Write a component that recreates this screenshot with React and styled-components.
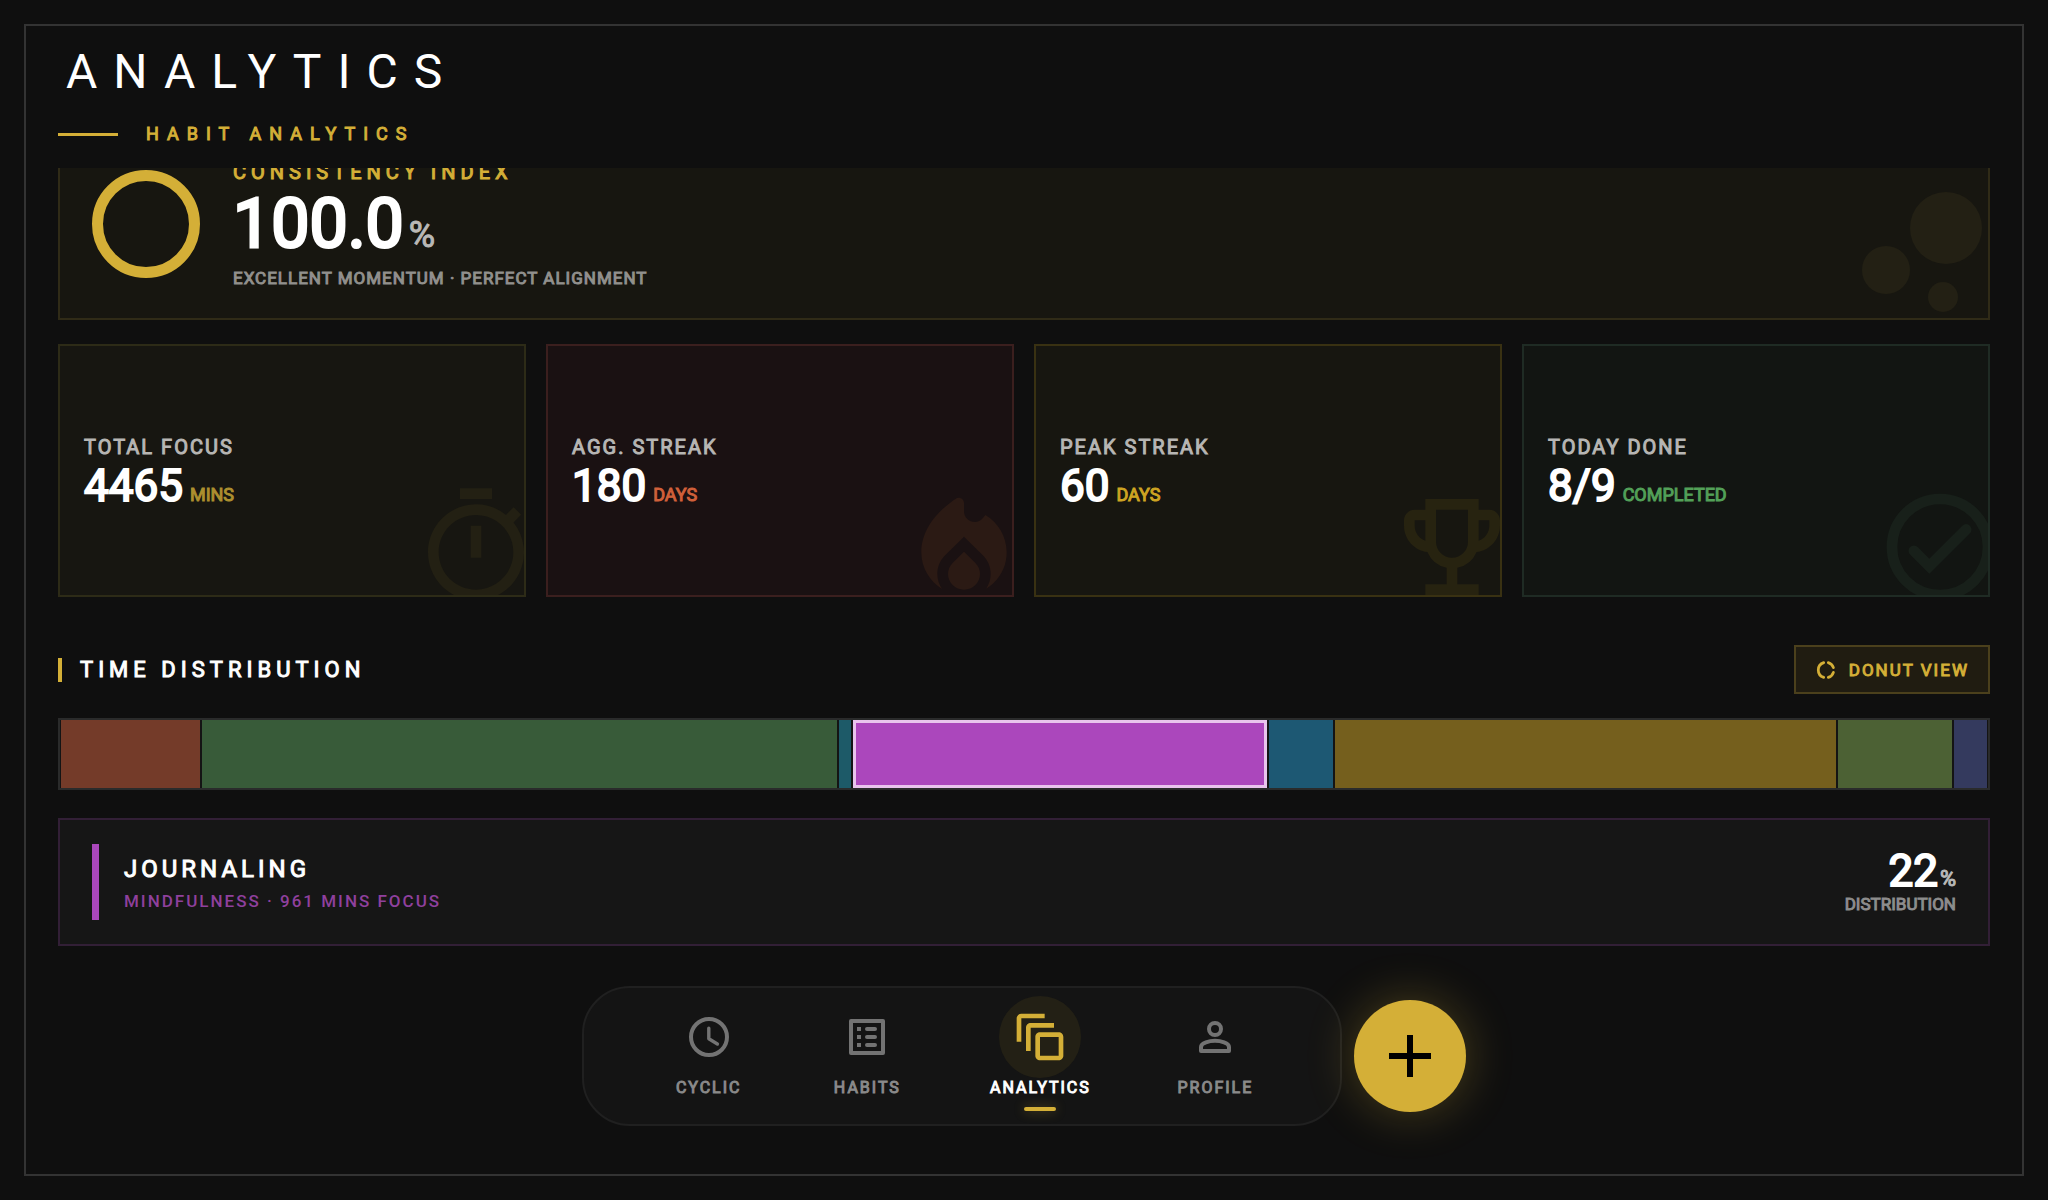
import React, { useLayoutEffect, useRef } from 'react';
import styled, { createGlobalStyle } from 'styled-components';
import {
  MdAdd,
  MdBubbleChart,
  MdOutlineAutoAwesomeMotion,
  MdOutlineEmojiEvents,
  MdOutlineTimer,
} from 'react-icons/md';

const GOLD = '#d4af37';

const GlobalStyle = createGlobalStyle`
  * {
    box-sizing: border-box;
  }

  body {
    margin: 0;
    background: #0f0f0f;
    color: #fff;
    font-family: Roboto, "Liberation Sans", sans-serif;
  }

  h1, h2, h3, p {
    margin: 0;
    font-weight: 400;
  }
`;

const Page = styled.div`
  height: 100vh;
  padding: 24px;
`;

const Frame = styled.div`
  position: relative;
  display: flex;
  flex-direction: column;
  height: 100%;
  border: 2px solid #333;
`;

const Header = styled.header`
  padding: 18px 32px 22px;
`;

const Title = styled.h1`
  padding-left: 8px;
  font-size: 48px;
  line-height: 56px;
  letter-spacing: 16px;
`;

const Subtitle = styled.div`
  display: flex;
  align-items: center;
  gap: 28px;
  margin-top: 22px;
  color: ${GOLD};
  font-size: 18px;
  line-height: 24px;
  letter-spacing: 8px;
  -webkit-text-stroke: 1px;
`;

const Dash = styled.span`
  width: 60px;
  height: 3px;
  background: ${GOLD};
`;

const Scroller = styled.main`
  flex: 1;
  min-height: 0;
  overflow-y: auto;
  scrollbar-width: none;
  padding: 24px 32px 228px;
`;

const Hero = styled.section`
  position: relative;
  display: flex;
  align-items: center;
  gap: 33px;
  height: 192px;
  padding: 0 32px;
  overflow: hidden;
  background: #171610;
  border: 2px solid #302b17;
`;

const Ring = styled.svg`
  width: 108px;
  height: 108px;
`;

const HeroText = styled.div`
  padding-top: 4px;
`;

const HeroLabel = styled.h2`
  color: ${GOLD};
  font-size: 20px;
  line-height: 24px;
  letter-spacing: 5px;
  -webkit-text-stroke: 1px;
`;

const HeroValue = styled.p`
  font-size: 68px;
  line-height: 80px;
  -webkit-text-stroke: 3px;
`;

const HeroPercent = styled.span`
  margin-left: 5px;
  color: #b9b8b6;
  font-size: 36px;
  line-height: 1;
  -webkit-text-stroke: 1px;
`;

const HeroNote = styled.p`
  color: #91908d;
  font-size: 17px;
  line-height: 28px;
  letter-spacing: 1px;
  -webkit-text-stroke: 1px;
`;

const HeroBubbles = styled(MdBubbleChart)`
  position: absolute;
  right: -24px;
  bottom: -24px;
  width: 180px;
  height: 180px;
  color: #232014;
`;

const Stats = styled.section`
  display: grid;
  grid-template-columns: repeat(4, 1fr);
  gap: 20px;
  margin-top: 24px;
`;

const StatCard = styled.div`
  position: relative;
  display: flex;
  flex-direction: column;
  justify-content: center;
  height: 253px;
  padding: 6px 24px 0;
  overflow: hidden;
  background: ${(props) => props.$bg};
  border: 2px solid ${(props) => props.$line};

  svg {
    position: absolute;
    right: -16px;
    bottom: -16px;
    width: 128px;
    height: 128px;
    color: ${(props) => props.$mark};
  }
`;

const StatLabel = styled.h3`
  color: #b7b6b4;
  font-size: 20px;
  line-height: 24px;
  letter-spacing: 2px;
  -webkit-text-stroke: 1px;
`;

const StatValue = styled.p`
  display: flex;
  align-items: baseline;
  gap: 7px;
  font-size: 44px;
  line-height: 54px;
  -webkit-text-stroke: 2px;
`;

const StatUnit = styled.span`
  color: ${(props) => props.$tone};
  font-size: 18px;
  line-height: 24px;
  -webkit-text-stroke: 1px;
`;

const SectionHead = styled.div`
  display: flex;
  align-items: center;
  justify-content: space-between;
  margin-top: 48px;
`;

const SectionTitle = styled.h2`
  display: flex;
  align-items: center;
  gap: 18px;
  font-size: 22px;
  line-height: 24px;
  letter-spacing: 5px;
  -webkit-text-stroke: 1px;

  &::before {
    content: '';
    width: 4px;
    height: 24px;
    background: ${GOLD};
  }
`;

const ViewButton = styled.button`
  display: flex;
  align-items: center;
  gap: 12px;
  height: 49px;
  padding: 0 19px;
  color: ${GOLD};
  background: #201c11;
  border: 2px solid #4b401c;
  font: 400 17px/24px Roboto, "Liberation Sans", sans-serif;
  letter-spacing: 2px;
  -webkit-text-stroke: 1px;
  cursor: pointer;
`;

const SplitBar = styled.div`
  display: flex;
  gap: 2px;
  height: 72px;
  margin-top: 24px;
  padding: 0 1px;
  background: #141414;
  border: 2px solid #2a2b2b;
`;

const Segment = styled.button`
  min-width: 0;
  padding: 0;
  background: ${(props) => props.$fill};
  border: none;
  box-shadow: ${(props) => (props.$active ? 'inset 0 0 0 3px #e9c4ed' : 'none')};
  cursor: pointer;
`;

const Detail = styled.section`
  display: flex;
  align-items: center;
  gap: 25px;
  margin-top: 28px;
  padding: 24px 32px;
  background: #161616;
  border: 2px solid #321f36;
`;

const DetailMark = styled.span`
  width: 7px;
  height: 76px;
  background: #ab47bc;
`;

const DetailText = styled.div`
  flex: 1;
  padding-top: 6px;
`;

const DetailName = styled.h3`
  font-size: 24px;
  line-height: 32px;
  letter-spacing: 4px;
  -webkit-text-stroke: 1px;
`;

const DetailNote = styled.p`
  color: #8f409d;
  font-size: 17px;
  line-height: 32px;
  font-weight: 500;
  letter-spacing: 2px;
`;

const Share = styled.div`
  text-align: right;
`;

const ShareValue = styled.p`
  font-size: 44px;
  line-height: 44px;
  -webkit-text-stroke: 2px;

  span {
    margin-left: 2px;
    color: #b9b9b9;
    font-size: 22px;
    line-height: 1;
    -webkit-text-stroke: 1px;
  }
`;

const ShareLabel = styled.p`
  color: #8d8d8d;
  font-size: 17px;
  line-height: 22px;
  -webkit-text-stroke: 1px;
`;

const Dock = styled.div`
  position: absolute;
  right: 0;
  bottom: 48px;
  left: 0;
  display: flex;
  align-items: center;
  justify-content: center;
  gap: 12px;
`;

const Nav = styled.nav`
  display: flex;
  justify-content: space-evenly;
  width: 760px;
  height: 140px;
  padding: 8px 0 0 2px;
  background: #141414;
  border: 2px solid #202020;
  border-radius: 48px;
`;

const NavItem = styled.a`
  display: flex;
  flex-direction: column;
  align-items: center;
  min-width: 72px;
  color: ${(props) => (props.$active ? '#fff' : '#8a8a8a')};
  font-size: 16px;
  line-height: 20px;
  letter-spacing: 2px;
  text-decoration: none;
  -webkit-text-stroke: 1px;

  &::after {
    content: '';
    display: ${(props) => (props.$active ? 'block' : 'none')};
    width: 32px;
    height: 4px;
    margin-top: 9px;
    background: ${GOLD};
    border-radius: 2px;
    box-shadow: 0 0 12px rgba(212, 175, 55, 0.4);
  }
`;

const NavIcon = styled.span`
  display: flex;
  align-items: center;
  justify-content: center;
  width: ${(props) => (props.$active ? 82 : 72)}px;
  height: 82px;
  color: ${(props) => (props.$active ? GOLD : '#737373')};
  background: ${(props) => (props.$active ? '#232015' : 'none')};
  border-radius: 50%;

  svg {
    width: ${(props) => (props.$active ? 56 : 48)}px;
    height: ${(props) => (props.$active ? 56 : 48)}px;
  }
`;

const AddButton = styled.button`
  display: flex;
  align-items: center;
  justify-content: center;
  width: 112px;
  height: 112px;
  padding: 0;
  color: #000;
  background: ${GOLD};
  border: none;
  border-radius: 50%;
  box-shadow: 0 0 48px rgba(212, 175, 55, 0.3);
  cursor: pointer;

  svg {
    width: 72px;
    height: 72px;
  }
`;

function FlameIcon() {
  return (
    <svg viewBox="0 0 24 24" fill="currentColor" aria-hidden="true">
      <path d="M12 12.9l-2.13 2.09C9.31 15.55 9 16.28 9 17.06 9 18.68 10.35 20 12 20s3-1.32 3-2.94c0-.78-.31-1.52-.87-2.07L12 12.9z" />
      <path d="M16 6l-.44.55C14.38 8.02 12 7.19 12 5.3V3.77c0-.8-.89-1.28-1.55-.84C8.12 4.49 4 7.97 4 13c0 2.92 1.56 5.47 3.89 6.86-.56-.79-.89-1.76-.89-2.8 0-1.32.52-2.56 1.47-3.5L12 10.1l3.53 3.47c.95.93 1.47 2.17 1.47 3.5 0 1.02-.31 1.96-.85 2.75 1.89-1.15 3.29-3.06 3.71-5.3.66-3.55-1.07-6.9-3.86-8.52z" />
    </svg>
  );
}

function CheckIcon() {
  return (
    <svg viewBox="0 0 24 24" fill="none" stroke="currentColor" strokeWidth="2" aria-hidden="true">
      <circle cx="12" cy="12" r="9" />
      <path d="M7.1 12.7L10 15.6L16.9 8.7" strokeLinecap="round" />
    </svg>
  );
}

function DonutIcon() {
  return (
    <svg width="22" height="22" viewBox="0 0 24 24" fill="none" stroke="currentColor" strokeWidth="3" strokeLinecap="round" aria-hidden="true">
      <path d="M9.5 3.9A8.5 8.5 0 0 0 9.5 20.1" />
      <path d="M14.5 3.9A8.5 8.5 0 0 1 20.1 9.5" />
      <path d="M14.5 20.1A8.5 8.5 0 0 0 20.1 14.5" />
    </svg>
  );
}

function ClockIcon() {
  return (
    <svg viewBox="0 0 24 24" fill="none" stroke="currentColor" strokeWidth="2" aria-hidden="true">
      <circle cx="12" cy="12" r="9" />
      <path d="M11.9 7.6V12.9L16.2 15.5" strokeWidth="1.7" strokeLinecap="round" strokeLinejoin="round" />
    </svg>
  );
}

function ListIcon() {
  return (
    <svg viewBox="0 0 24 24" fill="none" stroke="currentColor" strokeWidth="2" aria-hidden="true">
      <rect x="4" y="4" width="16" height="16" strokeLinejoin="round" />
      <path d="M7 8h2M7 12h2M7 16h2" />
      <path d="M12 8h4M12 12h4M12 16h4" strokeLinecap="round" />
    </svg>
  );
}

function PersonIcon() {
  return (
    <svg viewBox="0 0 24 24" fill="none" stroke="currentColor" strokeWidth="2" strokeLinejoin="round" aria-hidden="true">
      <circle cx="12" cy="8" r="3" />
      <path d="M5 17c0-2 4.2-3.1 7-3.1s7 1.1 7 3.1V19H5z" />
    </svg>
  );
}

const stats = [
  { label: 'TOTAL FOCUS', value: '4465', unit: 'MINS', tone: '#ac8f2f', bg: '#171611', line: '#2d2b17', mark: '#232013', Icon: MdOutlineTimer },
  { label: 'AGG. STREAK', value: '180', unit: 'DAYS', tone: '#d0603a', bg: '#1a1112', line: '#3b1f1e', mark: '#2b1a14', Icon: FlameIcon },
  { label: 'PEAK STREAK', value: '60', unit: 'DAYS', tone: '#cda422', bg: '#171610', line: '#393112', mark: '#272310', Icon: MdOutlineEmojiEvents },
  { label: 'TODAY DONE', value: '8/9', unit: 'COMPLETED', tone: '#52a058', bg: '#121512', line: '#1f2b24', mark: '#18201a', Icon: CheckIcon },
];

const segments = [
  { id: 'red', size: 139, fill: '#743b29' },
  { id: 'green', size: 635, fill: '#385b39' },
  { id: 'teal', size: 12, fill: '#1d5a68' },
  { id: 'purple', size: 414, fill: '#ab47bc', active: true },
  { id: 'blue', size: 64, fill: '#1d5873' },
  { id: 'gold', size: 501, fill: '#755f1d' },
  { id: 'olive', size: 114, fill: '#4c6134' },
  { id: 'indigo', size: 33, fill: '#343a5e' },
];

const tabs = [
  { label: 'CYCLIC', Icon: ClockIcon },
  { label: 'HABITS', Icon: ListIcon },
  { label: 'ANALYTICS', Icon: MdOutlineAutoAwesomeMotion, active: true },
  { label: 'PROFILE', Icon: PersonIcon },
];

export default function App() {
  const scroller = useRef(null);

  // open on the distribution, at the end of the list
  useLayoutEffect(() => {
    scroller.current.scrollTop = scroller.current.scrollHeight;
  }, []);

  return (
    <Page>
      <GlobalStyle />
      <Frame>
        <Header>
          <Title>ANALYTICS</Title>
          <Subtitle>
            <Dash />
            HABIT ANALYTICS
          </Subtitle>
        </Header>

        <Scroller ref={scroller}>
          <Hero>
            <Ring viewBox="0 0 108 108" aria-hidden="true">
              <circle cx="54" cy="54" r="48.5" fill="none" stroke={GOLD} strokeWidth="11" />
            </Ring>
            <HeroText>
              <HeroLabel>CONSISTENCY INDEX</HeroLabel>
              <HeroValue>
                100.0
                <HeroPercent>%</HeroPercent>
              </HeroValue>
              <HeroNote>EXCELLENT MOMENTUM · PERFECT ALIGNMENT</HeroNote>
            </HeroText>
            <HeroBubbles />
          </Hero>

          <Stats>
            {stats.map(({ label, value, unit, tone, bg, line, mark, Icon }) => (
              <StatCard key={label} $bg={bg} $line={line} $mark={mark}>
                <StatLabel>{label}</StatLabel>
                <StatValue>
                  {value}
                  <StatUnit $tone={tone}>{unit}</StatUnit>
                </StatValue>
                <Icon />
              </StatCard>
            ))}
          </Stats>

          <SectionHead>
            <SectionTitle>TIME DISTRIBUTION</SectionTitle>
            <ViewButton type="button">
              <DonutIcon />
              DONUT VIEW
            </ViewButton>
          </SectionHead>

          <SplitBar>
            {segments.map((s) => (
              <Segment
                key={s.id}
                type="button"
                aria-label={s.id}
                $fill={s.fill}
                $active={s.active}
                style={{ flex: `${s.size} 1 0` }}
              />
            ))}
          </SplitBar>

          <Detail>
            <DetailMark />
            <DetailText>
              <DetailName>JOURNALING</DetailName>
              <DetailNote>MINDFULNESS · 961 MINS FOCUS</DetailNote>
            </DetailText>
            <Share>
              <ShareValue>
                22
                <span>%</span>
              </ShareValue>
              <ShareLabel>DISTRIBUTION</ShareLabel>
            </Share>
          </Detail>
        </Scroller>

        <Dock>
          <Nav>
            {tabs.map(({ label, Icon, active }) => (
              <NavItem key={label} href="#" $active={active}>
                <NavIcon $active={active}>
                  <Icon />
                </NavIcon>
                {label}
              </NavItem>
            ))}
          </Nav>
          <AddButton type="button" aria-label="Add habit">
            <MdAdd />
          </AddButton>
        </Dock>
      </Frame>
    </Page>
  );
}
